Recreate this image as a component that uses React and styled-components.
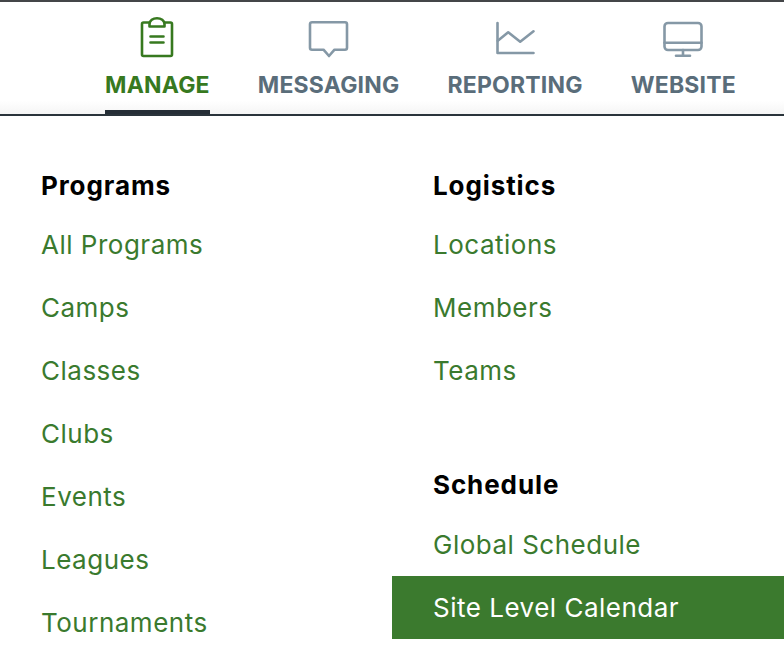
import React from 'react';
import styled, { createGlobalStyle } from 'styled-components';

const GlobalStyle = createGlobalStyle`
  html, body {
    margin: 0;
    padding: 0;
    background: #ffffff;
    overflow: hidden;
  }
  body {
    font-family: "Inter", "Liberation Sans", sans-serif;
  }
`;

const Page = styled.div`
  width: 784px;
  height: 664px;
  overflow: hidden;
  background: #ffffff;
`;

const TopNav = styled.nav`
  box-sizing: border-box;
  height: 116px;
  border-top: 2px solid #444648;
  border-bottom: 2px solid #2a343b;
  padding-left: 105px;
  display: flex;
  gap: 48px;
  background: linear-gradient(to bottom, #ffffff 88%, #f5f5f5 100%);
`;

const NavItem = styled.div`
  box-sizing: border-box;
  height: 112px;
  display: flex;
  flex-direction: column;
  align-items: center;
  padding-top: 14px;
  color: ${({ active }) => (active ? '#37791f' : '#5a6d7a')};
  border-bottom: 4px solid ${({ active }) => (active ? '#252e36' : 'transparent')};
`;

const NavIcon = styled.svg`
  width: 44px;
  height: 44px;
  flex: none;
  fill: none;
  stroke: ${({ active }) => (active ? '#37791f' : '#8598a6')};
  stroke-width: 2.6;
  stroke-linecap: round;
  stroke-linejoin: round;
`;

const NavLabel = styled.span`
  margin-top: 11px;
  font-size: 23px;
  line-height: 28px;
  font-weight: 700;
  letter-spacing: 0.2px;
  white-space: nowrap;
`;

const Menu = styled.div`
  display: grid;
  grid-template-columns: 392px 392px;
  padding-top: 50px;
`;

const Column = styled.div`
  display: flex;
  flex-direction: column;
`;

const Section = styled.section`
  display: flex;
  flex-direction: column;
  margin-top: ${({ spaced }) => (spaced ? '63px' : '0')};
`;

const Heading = styled.h3`
  margin: 0 0 ${({ spaced }) => (spaced ? '7px' : '6px')};
  padding-left: 41px;
  height: 41px;
  font-size: 26px;
  line-height: 40px;
  font-weight: 700;
  letter-spacing: 0.9px;
  color: #000000;
`;

const MenuLink = styled.a`
  display: flex;
  align-items: center;
  height: 63px;
  padding-left: 41px;
  font-size: 26px;
  letter-spacing: 0.5px;
  color: ${({ selected }) => (selected ? '#ffffff' : '#3a7a2e')};
  background: ${({ selected }) => (selected ? '#3b7a2e' : 'transparent')};
`;

const ClipboardIcon = () => (
  <NavIcon viewBox="0 0 44 44" active>
    <path d="M14 6.500H8.500a1.500 1.500 0 0 0-1.500 1.500v30.500a1.500 1.500 0 0 0 1.500 1.500h27a1.500 1.500 0 0 0 1.500-1.500V8a1.500 1.500 0 0 0-1.500-1.500H30" />
    <path d="M14.500 10.500V8C14.500 4.500 18 2.200 22 2.200S29.500 4.500 29.500 8v2.500z" />
    <path d="M15.500 20.500h13M15.500 26.500h13" />
  </NavIcon>
);

const MessageIcon = () => (
  <NavIcon viewBox="0 0 44 44">
    <path d="M5 6.200h33a2 2 0 0 1 2 2v23.500a2 2 0 0 1-2 2H27.500L22 40l-5.500-6.300H5a2 2 0 0 1-2-2V8.200a2 2 0 0 1 2-2z" />
  </NavIcon>
);

const ChartIcon = () => (
  <NavIcon viewBox="0 0 44 44">
    <path d="M4.500 7v30h36" />
    <path d="M4.800 24.700l10.400-8.400 12 9.400 13.300-10.400" />
  </NavIcon>
);

const MonitorIcon = () => (
  <NavIcon viewBox="0 0 44 44">
    <rect x="3.500" y="7" width="37" height="27" rx="3.500" />
    <path d="M3.500 26.700h37M22 34v5.700M15 39.700h14" />
  </NavIcon>
);

const navItems = [
  { label: 'MANAGE', Icon: ClipboardIcon, active: true },
  { label: 'MESSAGING', Icon: MessageIcon },
  { label: 'REPORTING', Icon: ChartIcon },
  { label: 'WEBSITE', Icon: MonitorIcon },
];

const columns = [
  [
    {
      title: 'Programs',
      links: ['All Programs', 'Camps', 'Classes', 'Clubs', 'Events', 'Leagues', 'Tournaments'],
    },
  ],
  [
    { title: 'Logistics', links: ['Locations', 'Members', 'Teams'] },
    { title: 'Schedule', links: ['Global Schedule', 'Site Level Calendar'], spaced: true },
  ],
];

const App = () => (
  <Page>
    <GlobalStyle />
    <TopNav>
      {navItems.map(({ label, Icon, active }) => (
        <NavItem key={label} active={active}>
          <Icon />
          <NavLabel>{label}</NavLabel>
        </NavItem>
      ))}
    </TopNav>
    <Menu>
      {columns.map((sections, i) => (
        <Column key={i}>
          {sections.map((section) => (
            <Section key={section.title} spaced={section.spaced}>
              <Heading spaced={section.spaced}>{section.title}</Heading>
              {section.links.map((link) => (
                <MenuLink key={link} selected={link === 'Site Level Calendar'}>
                  {link}
                </MenuLink>
              ))}
            </Section>
          ))}
        </Column>
      ))}
    </Menu>
  </Page>
);

export default App;
